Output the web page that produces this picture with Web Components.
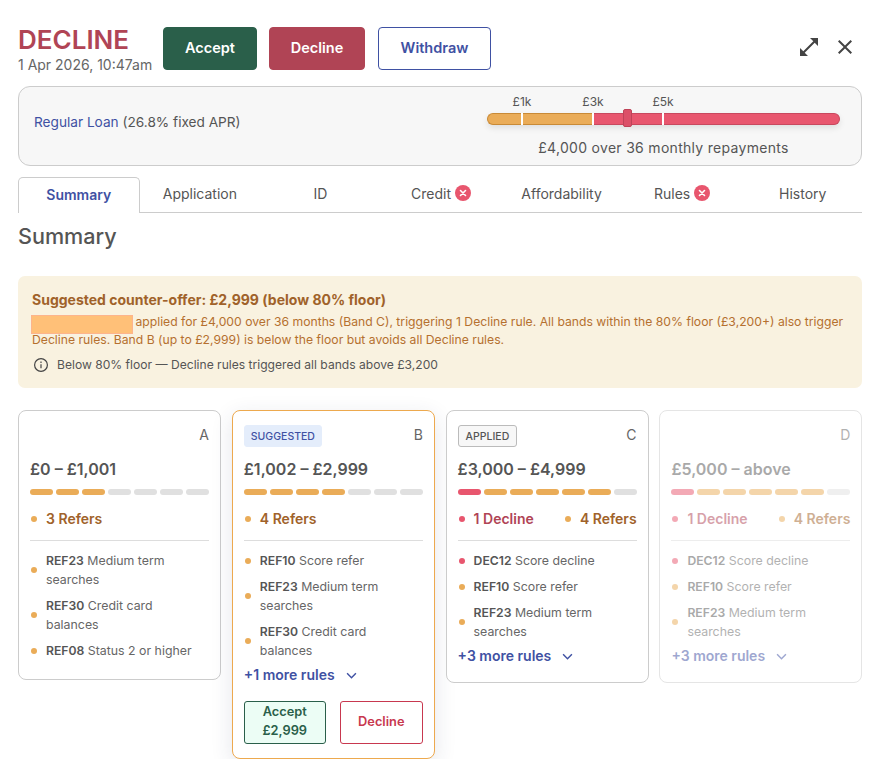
<!DOCTYPE html>
<html lang="en">
<head>
<meta charset="utf-8">
<title>Decision</title>
<style>
  body { margin: 0; background: #fff; font-family: Inter, "Liberation Sans", sans-serif; color: #555; }
</style>
</head>
<body>
<decision-page>
  <decision-header></decision-header>
  <loan-panel></loan-panel>
  <tab-bar></tab-bar>
  <offer-notice></offer-notice>
  <band-grid>
    <band-card letter="A" amount="£0 – £1,001" segments="aaaggg g">
      <count-item tone="refer" slot="counts">3 Refers</count-item>
      <rule-item tone="refer" code="REF23">Medium term<br>searches</rule-item>
      <rule-item tone="refer" code="REF30">Credit card<br>balances</rule-item>
      <rule-item tone="refer" code="REF08">Status 2 or higher</rule-item>
    </band-card>
    <band-card letter="B" amount="£1,002 – £2,999" segments="aaaaggg" badge="SUGGESTED" suggested more="+1 more rules">
      <count-item tone="refer" slot="counts">4 Refers</count-item>
      <rule-item tone="refer" code="REF10">Score refer</rule-item>
      <rule-item tone="refer" code="REF23">Medium term<br>searches</rule-item>
      <rule-item tone="refer" code="REF30">Credit card<br>balances</rule-item>
      <button-pair slot="actions"></button-pair>
    </band-card>
    <band-card letter="C" amount="£3,000 – £4,999" segments="raaaaag" badge="APPLIED" more="+3 more rules">
      <count-item tone="decline" slot="counts">1 Decline</count-item>
      <count-item tone="refer" slot="counts">4 Refers</count-item>
      <rule-item tone="decline" code="DEC12">Score decline</rule-item>
      <rule-item tone="refer" code="REF10">Score refer</rule-item>
      <rule-item tone="refer" code="REF23">Medium term<br>searches</rule-item>
    </band-card>
    <band-card letter="D" amount="£5,000 – above" segments="raaaaag" faded more="+3 more rules">
      <count-item tone="decline" slot="counts">1 Decline</count-item>
      <count-item tone="refer" slot="counts">4 Refers</count-item>
      <rule-item tone="decline" code="DEC12">Score decline</rule-item>
      <rule-item tone="refer" code="REF10">Score refer</rule-item>
      <rule-item tone="refer" code="REF23">Medium term<br>searches</rule-item>
    </band-card>
  </band-grid>
</decision-page>

<script>
function shadow(el, html) {
  el.attachShadow({ mode: "open" }).innerHTML = html;
}

class DecisionPage extends HTMLElement {
  constructor() {
    super();
    shadow(this, `<style>
      :host { display: block; box-sizing: border-box; width: 887px; padding: 0 25px 0 18px; }
    </style><slot></slot>`);
  }
}

class DecisionHeader extends HTMLElement {
  constructor() {
    super();
    shadow(this, `<style>
      :host { display: flex; align-items: flex-start; padding-top: 27px; height: 59px; }
      .title { width: 145px; }
      h1 { margin: 0; font-size: 26px; line-height: 26px; font-weight: 600; color: #b04455; }
      .date { font-size: 14px; line-height: 20px; margin-top: 2px; color: #666; white-space: nowrap; }
      .btns { display: flex; }
      button { box-sizing: border-box; height: 43px; border-radius: 4px; font: 600 14.5px Inter, sans-serif; border: 1px solid; padding: 0 0 3px; }
      .accept { width: 94px; background: #2a5f4a; border-color: #2a5f4a; color: #fff; margin-right: 12px; }
      .decline { width: 96px; background: #b04455; border-color: #b04455; color: #fff; margin-right: 13px; }
      .withdraw { width: 113px; background: #fff; border-color: #3f51a3; color: #3f51a3; }
      .icons { margin-left: auto; display: flex; gap: 12px; margin-top: 8px; margin-right: 5px; }
      svg { display: block; width: 24px; height: 24px; fill: #444; }
    </style>
    <div class="title"><h1>DECLINE</h1><div class="date">1 Apr 2026, 10:47am</div></div>
    <div class="btns">
      <button class="accept">Accept</button><button class="decline">Decline</button><button class="withdraw">Withdraw</button>
    </div>
    <div class="icons">
      <svg viewBox="0 0 24 24"><path d="M21 11V3h-8l3.29 3.29-10 10L3 13v8h8l-3.29-3.29 10-10z"/></svg>
      <svg viewBox="0 0 24 24"><path d="M19 6.41 17.59 5 12 10.59 6.41 5 5 6.41 10.59 12 5 17.59 6.41 19 12 13.41 17.59 19 19 17.59 13.41 12z"/></svg>
    </div>`);
  }
}

class LoanPanel extends HTMLElement {
  constructor() {
    super();
    shadow(this, `<style>
      :host { display: flex; box-sizing: border-box; height: 80px; background: #f7f7f7; border: 1px solid #ccc; border-radius: 12px; padding: 0 21px 0 15px; justify-content: space-between; align-items: center; }
      .product { font-size: 13.65px; margin-bottom: 8px; }
      .product b { font-weight: 400; color: #3f51a3; }
      .right { width: 353px; }
      .marks { display: grid; grid-template-columns: 35fr 71fr 70fr 177fr; font-size: 12px; line-height: 16px; color: #555; margin-bottom: 3px; }
      .marks span { justify-self: end; transform: translateX(50%); }
      .track { position: relative; display: flex; height: 12px; border-radius: 6px; box-shadow: 0 3px 6px rgba(0,0,0,.1); }
      .seg { box-sizing: border-box; border: 1px solid; }
      .orange { flex: 0 0 106px; background: #eaac58; border-color: #c98a36; border-right: 0; border-radius: 6px 0 0 6px; }
      .red { flex: 1; background: #e8566e; border-color: #c8485e; border-left: 0; border-radius: 0 6px 6px 0; }
      .tick { position: absolute; top: 0; bottom: 0; width: 2px; background: #fff; }
      .thumb { position: absolute; left: 136px; top: -4px; box-sizing: border-box; width: 9px; height: 18px; background: #dc5068; border: 1px solid #bf4358; border-radius: 2px; }
      .caption { text-align: center; font-size: 14px; letter-spacing: .3px; line-height: 20px; margin-top: 13px; }
    </style>
    <div class="product"><b>Regular Loan</b> (26.8% fixed APR)</div>
    <div class="right">
      <div class="marks"><span>£1k</span><span>£3k</span><span>£5k</span></div>
      <div class="track">
        <div class="seg orange"></div><div class="seg red"></div>
        <i class="tick" style="left:34px"></i><i class="tick" style="left:105px"></i><i class="tick" style="left:175px"></i>
        <i class="thumb"></i>
      </div>
      <div class="caption">£4,000 over 36 monthly repayments</div>
    </div>`);
  }
}

class TabBar extends HTMLElement {
  constructor() {
    super();
    const x = `<svg viewBox="0 0 16 16"><circle cx="8" cy="8" r="8" fill="#e8566e"/><path d="M5.5 5.5l5 5M10.5 5.5l-5 5" stroke="#fff" stroke-width="1.6" stroke-linecap="round"/></svg>`;
    shadow(this, `<style>
      :host { display: grid; grid-template-columns: repeat(7, 1fr); margin-top: 11px; height: 35px; border-bottom: 1px solid #ccc; }
      .tab { display: flex; align-items: center; justify-content: center; gap: 4px; font-size: 14px; color: #555; padding: 0 0 4px 2px; }
      .on { box-sizing: border-box; height: 36px; border: 1px solid #ccc; border-bottom: 0; border-radius: 5px 5px 0 0; background: #fff; color: #3f51a3; font-weight: 600; padding: 0 0 2px; margin-right: -1px; }
      svg { width: 16px; height: 16px; display: block; }
    </style>
    <div class="tab on">Summary</div>
    <div class="tab">Application</div>
    <div class="tab">ID</div>
    <div class="tab">Credit ${x}</div>
    <div class="tab">Affordability</div>
    <div class="tab">Rules ${x}</div>
    <div class="tab">History</div>`);
  }
}

class OfferNotice extends HTMLElement {
  constructor() {
    super();
    shadow(this, `<style>
      :host { display: block; }
      h2 { margin: 10px 0 27px; font-size: 21.6px; line-height: 26px; font-weight: 500; color: #555; }
      .box { background: #f9f2e0; border-radius: 7px; padding: 14px 14px 13px; height: 85px; }
      .head { font-size: 14px; line-height: 19px; font-weight: 700; color: #a0622a; }
      .body { font-size: 12.2px; line-height: 17px; color: #b5702f; margin-top: 4px; }
      .redact { display: inline-block; box-sizing: border-box; width: 102px; height: 19px; margin: -3px -1px -3px -1px; vertical-align: -5px; background: #ffc078; border: 1px solid #fdb48c; }
      .info { display: flex; align-items: center; gap: 8px; font-size: 12.1px; line-height: 18px; color: #555; margin-top: 8px; }
      svg { width: 16px; height: 16px; display: block; margin-left: 1px; }
    </style>
    <h2>Summary</h2>
    <div class="box">
      <div class="head">Suggested counter-offer: £2,999 (below 80% floor)</div>
      <div class="body"><span class="redact"></span> applied for £4,000 over 36 months (Band C), triggering 1 Decline rule. All bands within the 80% floor (£3,200+) also trigger Decline rules. Band B (up to £2,999) is below the floor but avoids all Decline rules.</div>
      <div class="info">
        <svg viewBox="0 0 16 16" fill="none" stroke="#444" stroke-width="1.2"><circle cx="8" cy="8" r="6.4"/><path d="M8 7.3v3.9"/><path d="M8 4.6v1.3"/></svg>
        Below 80% floor — Decline rules triggered all bands above £3,200
      </div>
    </div>`);
  }
}

class BandGrid extends HTMLElement {
  constructor() {
    super();
    shadow(this, `<style>
      :host { display: grid; grid-template-columns: repeat(4, 203px); column-gap: 10.8px; align-items: start; margin-top: 22px; }
    </style><slot></slot>`);
  }
}

class BandCard extends HTMLElement {
  constructor() {
    super();
    const badge = this.getAttribute("badge");
    const more = this.getAttribute("more");
    const colours = { a: "#eaac58", r: "#e8566e", g: "#e0e0e0" };
    const segs = this.getAttribute("segments").replace(/\s/g, "").split("")
      .map(c => `<i style="background:${colours[c]}"></i>`).join("");
    shadow(this, `<style>
      :host { display: block; box-sizing: border-box; background: #fff; border: 1px solid #ccc; border-radius: 8px; padding: 14px 11px 15px; }
      :host([suggested]) { border-color: #eda94e; box-shadow: 0 6px 22px rgba(40,50,90,.12); }
      :host([faded]) { opacity: .5; }
      .top { display: flex; justify-content: space-between; align-items: flex-start; height: 22px; }
      .badge { box-sizing: border-box; height: 22px; padding: 0 7px; display: flex; align-items: center; font-size: 10.5px; font-weight: 500; border-radius: 3px; color: #555; background: #f7f7f7; border: 1px solid #bbb; }
      :host([suggested]) .badge { padding: 0 6px; background: #e4edfb; border-color: #e4edfb; color: #3f51a3; }
      .letter { font-size: 14px; line-height: 20px; color: #666; }
      .amount { font-size: 16px; line-height: 22px; font-weight: 600; color: #555; margin-top: 11px; }
      .segs { display: flex; gap: 3px; margin-top: 9px; }
      .segs i { flex: 1; height: 6px; border-radius: 3px; }
      .counts { display: flex; justify-content: space-between; margin-top: 14px; padding-bottom: 11px; border-bottom: 1px solid #ddd; }
      .rules { display: flex; flex-direction: column; gap: 7px; margin-top: 10px; margin-bottom: 4px; }
      .more { display: flex; align-items: center; gap: 11px; font-size: 14px; line-height: 20px; font-weight: 600; color: #3f51a3; margin: 5px 0 1px; }
      .more svg { width: 11px; height: 7px; display: block; }
    </style>
    <div class="top">${badge ? `<span class="badge">${badge}</span>` : "<span></span>"}<span class="letter">${this.getAttribute("letter")}</span></div>
    <div class="amount">${this.getAttribute("amount")}</div>
    <div class="segs">${segs}</div>
    <div class="counts"><slot name="counts"></slot></div>
    <div class="rules"><slot></slot></div>
    ${more ? `<div class="more">${more}<svg viewBox="0 0 10 6" fill="none" stroke="#3f51a3" stroke-width="1.3"><path d="M1 1l4 4 4-4"/></svg></div>` : ""}
    <slot name="actions"></slot>`);
  }
}

class CountItem extends HTMLElement {
  constructor() {
    super();
    const decline = this.getAttribute("tone") === "decline";
    shadow(this, `<style>
      :host { display: flex; align-items: center; font-size: 14px; line-height: 20px; font-weight: 600; color: ${decline ? "#b04455" : "#a0622a"}; }
      i { width: 6px; height: 6px; border-radius: 50%; margin: 0 9px 0 1px; background: ${decline ? "#e8566e" : "#eaac58"}; }
    </style><i></i><slot></slot>`);
  }
}

class RuleItem extends HTMLElement {
  constructor() {
    super();
    const decline = this.getAttribute("tone") === "decline";
    shadow(this, `<style>
      :host { display: flex; align-items: center; font-size: 12.35px; line-height: 19px; color: #666; }
      i { flex: none; width: 6px; height: 6px; border-radius: 50%; margin: 0 9px 0 1px; background: ${decline ? "#e8566e" : "#eaac58"}; }
      b { font-weight: 600; font-size: 12.2px; color: #555; }
    </style><i></i><span><b>${this.getAttribute("code")}</b> <slot></slot></span>`);
  }
}

class ButtonPair extends HTMLElement {
  constructor() {
    super();
    shadow(this, `<style>
      :host { display: flex; justify-content: space-between; margin: 16px 0 -1px; }
      button { box-sizing: border-box; height: 43px; border-radius: 3px; font: 600 12.8px/19px Inter, sans-serif; padding: 0 0 2px; }
      .yes { width: 82px; background: #ecfdf5; border: 1px solid #2a5f4a; color: #2a5f4a; padding-bottom: 4px; }
      .no { width: 83px; background: #fff; border: 1px solid #c8384f; color: #c8384f; }
    </style>
    <button class="yes">Accept<br>£2,999</button><button class="no">Decline</button>`);
  }
}

customElements.define("decision-page", DecisionPage);
customElements.define("decision-header", DecisionHeader);
customElements.define("loan-panel", LoanPanel);
customElements.define("tab-bar", TabBar);
customElements.define("offer-notice", OfferNotice);
customElements.define("band-grid", BandGrid);
customElements.define("band-card", BandCard);
customElements.define("count-item", CountItem);
customElements.define("rule-item", RuleItem);
customElements.define("button-pair", ButtonPair);
</script>
</body>
</html>
